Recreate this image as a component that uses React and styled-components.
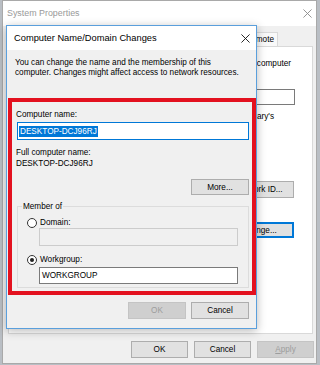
import styled, { createGlobalStyle } from "styled-components";

const GlobalStyle = createGlobalStyle`
  html, body {
    margin: 0;
    padding: 0;
  }

  body {
    width: 320px;
    height: 365px;
    overflow: hidden;
    background: #b9bec4;
    font-family: "Liberation Sans", Arial, sans-serif;
    font-size: 8.2px;
    line-height: 11px;
    color: #000;
  }
`;

const Window = styled.div`
  position: relative;
  box-sizing: border-box;
  width: 315px;
  height: 364px;
  margin-left: 2px;
  border: 1px solid #a9a9a9;
  background: #f0f0f0;
  display: flex;
  flex-direction: column;
`;

const TitleBar = styled.div`
  flex: none;
  display: flex;
  align-items: center;
  justify-content: space-between;
  height: ${(p) => p.$height}px;
  padding: 0 ${(p) => p.$padRight}px 0 ${(p) => p.$padLeft}px;
  background: #fff;
  color: ${(p) => (p.$active ? "#000" : "#999")};
  font-size: ${(p) => p.$size}px;
`;

const TabStrip = styled.div`
  flex: none;
  display: flex;
  justify-content: flex-end;
  align-items: flex-end;
  height: 20px;
  padding-right: 38px;
  overflow: hidden;
`;

const Tab = styled.div`
  box-sizing: border-box;
  flex: none;
  height: 14px;
  padding: 0 3px;
  line-height: 13px;
  border: 1px solid #d9d9d9;
  border-bottom: none;
  background: #f9f9f9;
  white-space: nowrap;
`;

const TabPanel = styled.div`
  box-sizing: border-box;
  flex: none;
  height: 288px;
  margin: 0 3px 0 5px;
  border: 1px solid #d9d9d9;
  background: #fff;
  display: flex;
  flex-direction: column;
  align-items: flex-end;
`;

const PanelText = styled.div`
  margin-top: ${(p) => p.$top}px;
  margin-right: ${(p) => p.$right}px;
  line-height: 10px;
  white-space: nowrap;
`;

const TextBox = styled.div`
  box-sizing: border-box;
  flex: none;
  display: flex;
  align-items: center;
  width: ${(p) => (p.$width ? `${p.$width}px` : "auto")};
  height: ${(p) => p.$height}px;
  margin: ${(p) => p.$margin};
  padding: 0 1px;
  border: 1px solid
    ${(p) => (p.$focused ? "#0078d7" : p.$disabled ? "#cccccc" : "#7a7a7a")};
  background: ${(p) => (p.$disabled ? "#f0f0f0" : "#fff")};
  white-space: nowrap;
`;

const Selection = styled.span`
  padding: 0 1px;
  line-height: 11px;
  background: #0078d7;
  color: #fff;
`;

const Button = styled.button`
  box-sizing: border-box;
  flex: none;
  width: ${(p) => p.$width}px;
  height: ${(p) => p.$height || 17}px;
  margin: ${(p) => p.$margin || 0};
  padding: 0;
  border: 1px solid
    ${(p) => (p.$default ? "#0078d7" : p.disabled ? "#c4c4c4" : "#adadad")};
  box-shadow: ${(p) => (p.$default ? "inset 0 0 0 1px #0078d7" : "none")};
  background: ${(p) => (p.disabled ? "#cfcfcf" : "#e1e1e1")};
  color: ${(p) => (p.disabled ? "#9d9d9d" : "#000")};
  font-family: inherit;
  font-size: inherit;
  line-height: 11px;
  white-space: nowrap;
  overflow: hidden;
`;

const ButtonRow = styled.div`
  flex: none;
  display: flex;
  justify-content: flex-end;
  gap: ${(p) => p.$gap}px;
  margin-top: 7px;
  padding-right: ${(p) => p.$padRight}px;
`;

const Dialog = styled.div`
  position: absolute;
  left: 3px;
  top: 24px;
  box-sizing: border-box;
  width: 251px;
  height: 304px;
  border: 1px solid #5a9fdc;
  background: #f0f0f0;
  box-shadow: 0 2px 9px rgba(0, 0, 0, 0.28);
  display: flex;
  flex-direction: column;
`;

const DialogBody = styled.div`
  flex: 1;
  display: flex;
  flex-direction: column;
`;

const Description = styled.p`
  margin: 8px 0 0 8px;
  line-height: 10px;
`;

const Highlight = styled.div`
  box-sizing: border-box;
  display: flex;
  flex-direction: column;
  margin: 20px 0 0 1px;
  padding: 7px 3px 0 4px;
  border: 4px solid #e3111f;
`;

const Label = styled.div`
  margin-top: ${(p) => p.$top || 0}px;
  white-space: nowrap;
`;

const GroupBox = styled.fieldset`
  box-sizing: border-box;
  margin: 6px 0 3px 1px;
  padding: 0 10px 3px 9px;
  border: 1px solid #dcdcdc;
  min-width: 0;

  legend {
    margin-left: -5px;
    padding: 0 1px;
    line-height: 11px;
  }
`;

const RadioRow = styled.label`
  display: flex;
  align-items: center;
  gap: 3px;
  height: 11px;
  margin-top: ${(p) => p.$top}px;
`;

const Radio = styled.span`
  box-sizing: border-box;
  flex: none;
  display: flex;
  align-items: center;
  justify-content: center;
  width: 10px;
  height: 10px;
  border: 1px solid #333;
  border-radius: 50%;
  background: #fff;

  &::after {
    content: "";
    width: 4px;
    height: 4px;
    border-radius: 50%;
    background: ${(p) => (p.$checked ? "#222" : "transparent")};
  }
`;

const CloseIcon = ({ color, size }) => (
  <svg width={size} height={size} viewBox="0 0 10 10">
    <path d="M0.5 0.5 L9.5 9.5 M9.5 0.5 L0.5 9.5" stroke={color} strokeWidth="1" />
  </svg>
);

export default function App() {
  return (
    <>
      <GlobalStyle />
      <Window>
        <TitleBar $height={25} $padLeft={4} $padRight={4} $size={8.9}>
          <span>System Properties</span>
          <CloseIcon color="#8a8a8a" size={9} />
        </TitleBar>

        {/* only the last tab shows past the dialog */}
        <TabStrip>
          <Tab>Remote</Tab>
        </TabStrip>

        <TabPanel>
          <PanelText $top={12} $right={21}>
            computer
          </PanelText>
          <TextBox $width={180} $height={16} $margin="20px 17px 0 0" />
          <PanelText $top={7} $right={38}>
            Mary's
          </PanelText>
          <Button $width={70} $margin="59px 18px 0 0">
            Network ID...
          </Button>
          <Button $width={70} $height={16} $margin="24px 18px 0 0" $default>
            Change...
          </Button>
        </TabPanel>

        <ButtonRow $gap={6} $padRight={2}>
          <Button $width={57}>OK</Button>
          <Button $width={57}>Cancel</Button>
          <Button $width={57} disabled>
            <u>A</u>pply
          </Button>
        </ButtonRow>

        <Dialog>
          <TitleBar $height={24} $padLeft={7} $padRight={6} $size={9.3} $active>
            <span>Computer Name/Domain Changes</span>
            <CloseIcon color="#111" size={9} />
          </TitleBar>

          <DialogBody>
            <Description>
              You can change the name and the membership of this
              <br />
              computer. Changes might affect access to network resources.
            </Description>

            <Highlight>
              <Label>Computer name:</Label>
              <TextBox $height={18} $margin="2px 0 0 1px" $focused>
                <Selection>DESKTOP-DCJ96RJ</Selection>
              </TextBox>
              <Label $top={7}>Full computer name:</Label>
              <Label>DESKTOP-DCJ96RJ</Label>
              <Button $width={58} $height={16} $margin="10px 0 0 auto">
                More...
              </Button>

              <GroupBox>
                <legend>Member of</legend>
                <RadioRow $top={5}>
                  <Radio />
                  <span>Domain:</span>
                </RadioRow>
                <TextBox $height={18} $margin="0 0 0 12px" $disabled />
                <RadioRow $top={8}>
                  <Radio $checked />
                  <span>Workgroup:</span>
                </RadioRow>
                <TextBox $height={17} $margin="2px 0 0 12px">
                  <span style={{ paddingLeft: 1 }}>WORKGROUP</span>
                </TextBox>
              </GroupBox>
            </Highlight>

            <ButtonRow $gap={5} $padRight={7}>
              <Button $width={58} disabled>
                OK
              </Button>
              <Button $width={58}>Cancel</Button>
            </ButtonRow>
          </DialogBody>
        </Dialog>
      </Window>
    </>
  );
}
